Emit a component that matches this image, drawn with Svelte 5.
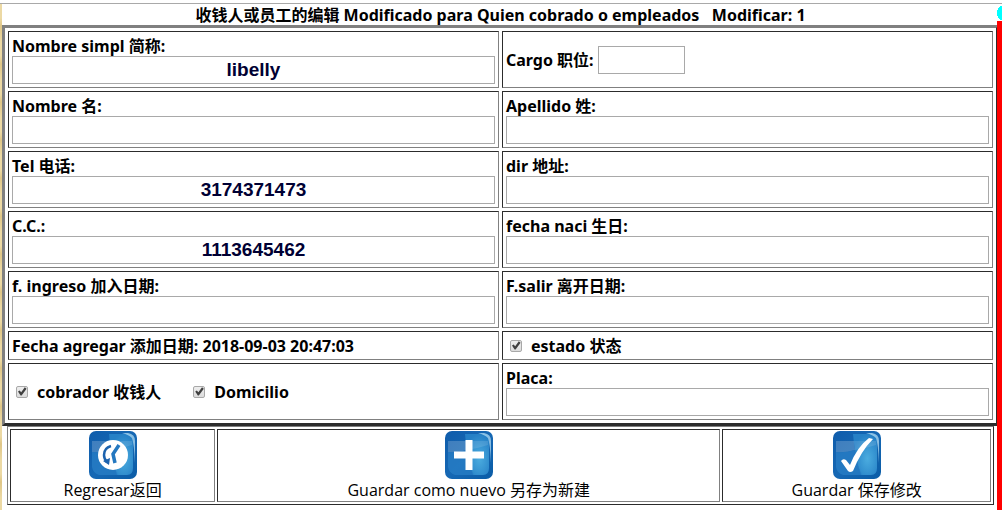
<script lang="ts">
  let form = $state({
    simple: 'libelly',
    cargo: '',
    nombre: '',
    apellido: '',
    tel: '3174371473',
    dir: '',
    cc: '1113645462',
    nacimiento: '',
    ingreso: '',
    salida: '',
    placa: '',
    estado: true,
    cobrador: true,
    domicilio: true
  });
</script>

{#snippet tile(id: string)}
  <defs>
    <linearGradient id="{id}-base" x1="0" y1="0" x2="1" y2="1">
      <stop offset="0" stop-color="#0f5cab" />
      <stop offset="0.5" stop-color="#1668b4" />
      <stop offset="1" stop-color="#0a5ca6" />
    </linearGradient>
    <radialGradient id="{id}-glow" cx="0.6" cy="0.6" r="0.6">
      <stop offset="0" stop-color="#4bacdf" />
      <stop offset="1" stop-color="#2580c6" />
    </radialGradient>
  </defs>
  <rect width="48" height="48" rx="7" fill="url(#{id}-base)" />
  <path d="M20 3H39Q44 4 44 10V37Q44 44 38 44H28Q22 28 20 3Z" fill="url(#{id}-glow)" />
  <path d="M3 10H21Q21 15 22 19Q12 22 3 21Z" fill="#fff" opacity="0.2" />
  <path d="M21 10H43V14Q34 17 22 19Z" fill="#fff" opacity="0.12" />
  <path d="M3 21Q12 22 22 19Q24 34 29 44H10Q4 42 3 36Z" fill="#2a80c8" opacity="0.7" />
  <path d="M33 2H39Q46 3 46 10V32Q45 12 43 7Q40 4 33 2Z" fill="#b9e2f7" opacity="0.7" />
{/snippet}

<div class="page">
  <form class="editor" onsubmit={(e) => e.preventDefault()}>
    <h1>收钱人或员工的编辑 Modificado para Quien cobrado o empleados &nbsp; Modificar: 1</h1>

    <table class="fields">
      <tbody>
        <tr>
          <td>
            <label for="simple">Nombre simpl 简称:</label>
            <input id="simple" class="text" type="text" bind:value={form.simple} />
          </td>
          <td>
            <div class="inline">
              <label for="cargo">Cargo 职位:</label>
              <input id="cargo" class="text short" type="text" bind:value={form.cargo} />
            </div>
          </td>
        </tr>
        <tr>
          <td>
            <label for="nombre">Nombre 名:</label>
            <input id="nombre" class="text" type="text" bind:value={form.nombre} />
          </td>
          <td>
            <label for="apellido">Apellido 姓:</label>
            <input id="apellido" class="text" type="text" bind:value={form.apellido} />
          </td>
        </tr>
        <tr>
          <td>
            <label for="tel">Tel 电话:</label>
            <input id="tel" class="text" type="text" bind:value={form.tel} />
          </td>
          <td>
            <label for="dir">dir 地址:</label>
            <input id="dir" class="text" type="text" bind:value={form.dir} />
          </td>
        </tr>
        <tr>
          <td>
            <label for="cc">C.C.:</label>
            <input id="cc" class="text" type="text" bind:value={form.cc} />
          </td>
          <td>
            <label for="nacimiento">fecha naci 生日:</label>
            <input id="nacimiento" class="text" type="text" bind:value={form.nacimiento} />
          </td>
        </tr>
        <tr>
          <td>
            <label for="ingreso">f. ingreso 加入日期:</label>
            <input id="ingreso" class="text" type="text" bind:value={form.ingreso} />
          </td>
          <td>
            <label for="salida">F.salir 离开日期:</label>
            <input id="salida" class="text" type="text" bind:value={form.salida} />
          </td>
        </tr>
        <tr>
          <td><p>Fecha agregar 添加日期: 2018-09-03 20:47:03</p></td>
          <td>
            <div class="checks">
              <input id="estado" type="checkbox" bind:checked={form.estado} />
              <label for="estado">estado 状态</label>
            </div>
          </td>
        </tr>
        <tr>
          <td>
            <div class="checks">
              <input id="cobrador" type="checkbox" bind:checked={form.cobrador} />
              <label for="cobrador">cobrador 收钱人</label>
              <input id="domicilio" type="checkbox" bind:checked={form.domicilio} />
              <label for="domicilio">Domicilio</label>
            </div>
          </td>
          <td>
            <label for="placa">Placa:</label>
            <input id="placa" class="text" type="text" bind:value={form.placa} />
          </td>
        </tr>
      </tbody>
    </table>

    <table class="actions">
      <tbody>
        <tr>
          <td class="back">
            <button type="button">
              <svg viewBox="0 0 48 48" aria-hidden="true">
                {@render tile('back')}
                <circle cx="24" cy="24" r="15" fill="#fff" />
                <path d="M22 15Q15 17 15 24Q15 28 18 31" fill="none" stroke="#1c62ae" stroke-width="2.5" />
                <path d="M14 30L21 27L20 34Z" fill="#1c62ae" />
                <path d="M30 14L24 23L26 32" fill="none" stroke="#2478c0" stroke-width="3.5" />
              </svg>
              <span>Regresar返回</span>
            </button>
          </td>
          <td>
            <button type="button">
              <svg viewBox="0 0 48 48" aria-hidden="true">
                {@render tile('add')}
                <path d="M20.500 9H27.500V20.500H39V27.500H27.500V39H20.500V27.500H9V20.500H20.500Z" fill="#fff" />
              </svg>
              <span>Guardar como nuevo 另存为新建</span>
            </button>
          </td>
          <td class="save">
            <button type="submit">
              <svg viewBox="0 0 48 48" aria-hidden="true">
                {@render tile('save')}
                <path d="M8 30Q10 27 13 29L17 34Q24 16 36 7L40 8Q28 20 20 40Q17 42 15 40Z" fill="#fff" />
              </svg>
              <span>Guardar 保存修改</span>
            </button>
          </td>
        </tr>
      </tbody>
    </table>
  </form>
  <div class="dot"></div>
  <div class="rail"></div>
</div>

<style>
  :global(body) {
    background: #fff;
    color: #000;
  }
  .page {
    position: relative;
    box-sizing: border-box;
    min-height: 100vh;
    padding: 4px 3px 0 2px;
    overflow: hidden;
    font: 16px/19px 'Open Sans', 'Noto Sans CJK SC', sans-serif;
  }
  .page::before {
    content: '';
    position: absolute;
    top: 4px;
    bottom: 0;
    left: 0;
    width: 2px;
    background: repeating-linear-gradient(#ecd9a4 0 14px, #dfc687 22px, #ecd9a4 38px);
  }
  .page::after {
    content: '';
    position: absolute;
    top: 3px;
    left: 0;
    right: 0;
    height: 1px;
    background: #a9a9a9;
  }
  h1,
  p,
  label,
  span {
    display: block;
    margin: 0;
    padding-top: 2px;
  }
  h1,
  .fields {
    font-family: 'Noto Sans', 'Noto Sans CJK SC', sans-serif;
    font-weight: 700;
  }
  h1 {
    font-size: 16px;
    text-align: center;
  }
  table {
    box-sizing: border-box;
    table-layout: fixed;
    border-style: solid;
    border-color: #808080 #2c2c2c #2c2c2c #808080;
  }
  td {
    box-sizing: border-box;
    border: 1px solid;
    border-color: #2c2c2c #808080 #808080 #2c2c2c;
  }
  .fields {
    width: 100%;
    border-width: 3px;
    border-spacing: 3px;
  }
  .fields td {
    padding: 3px;
  }
  .inline {
    display: flex;
    align-items: center;
    gap: 4px;
  }
  .text {
    box-sizing: border-box;
    display: block;
    width: 100%;
    height: 28px;
    margin: 0;
    padding: 1px;
    border: 1px solid #a9a9a9;
    background: #fff;
    color: #000033;
    font: bold 19px 'Liberation Sans', Arial, sans-serif;
    text-align: center;
  }
  .short {
    width: 87px;
  }
  .checks {
    display: flex;
    align-items: center;
  }
  .checks label {
    margin-right: 28px;
  }
  .checks input {
    appearance: none;
    box-sizing: border-box;
    width: 12px;
    height: 12px;
    margin: 0 9px 0 4px;
    border: 1px solid #a8a8a8;
    border-radius: 2px;
    background: linear-gradient(#eee, #dcdcdc);
  }
  .checks input:checked::before {
    content: '';
    display: block;
    width: 10px;
    height: 10px;
    background: #404040;
    clip-path: polygon(10% 50%, 26% 40%, 42% 58%, 78% 8%, 96% 22%, 46% 90%, 36% 90%);
  }
  .actions {
    width: 99%;
    margin: 0 auto;
    border-width: 1px;
    border-spacing: 2px;
  }
  .actions td {
    padding: 1px;
  }
  .back {
    width: 21%;
  }
  .save {
    width: 27.5%;
  }
  button {
    display: block;
    width: 100%;
    padding: 0;
    border: 0;
    background: none;
    color: inherit;
    font: inherit;
    cursor: pointer;
  }
  svg {
    display: block;
    width: 48px;
    height: 48px;
    margin: 0 auto;
  }
  .dot,
  .rail {
    position: absolute;
    right: 0;
    width: 5px;
  }
  .dot {
    top: 5px;
    height: 16px;
    background: radial-gradient(circle at 8px 8px, #00ffff 8px, transparent 8px);
  }
  .rail {
    top: 21px;
    bottom: 0;
    background: #f00;
  }
</style>
